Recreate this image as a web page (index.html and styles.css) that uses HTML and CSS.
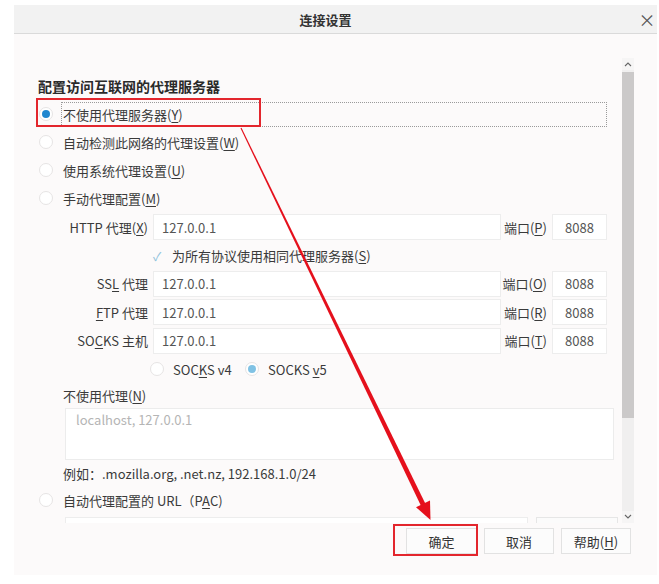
FILE: index.html
```html
<!DOCTYPE html>
<html lang="zh-CN">
<head>
  <meta charset="UTF-8" />
  <title>连接设置</title>
  <meta name="viewport" content="width=device-width, initial-scale=1.0" />
  <link rel="stylesheet" href="styles.css">
</head>
<body>
  <div class="dialog">
    <div class="titlebar">
      <span class="title">连接设置</span>
      <span class="close">×</span>
    </div>

    <div class="main">
      <div class="pane">
        <h2>配置访问互联网的代理服务器</h2>

        <div class="radio-row">
          <span class="radio checked"></span>
          <span class="label focus"><span>不使用代理服务器(<u>Y</u>)</span></span>
        </div>
        <div class="radio-row">
          <span class="radio"></span>
          <span class="label"><span>自动检测此网络的代理设置(<u>W</u>)</span></span>
        </div>
        <div class="radio-row">
          <span class="radio"></span>
          <span class="label"><span>使用系统代理设置(<u>U</u>)</span></span>
        </div>
        <div class="radio-row">
          <span class="radio"></span>
          <span class="label"><span>手动代理配置(<u>M</u>)</span></span>
        </div>

        <div class="manual">
          <span class="field-label"><span>HTTP 代理(<u>X</u>)</span></span>
          <span class="input">127.0.0.1</span>
          <span class="field-label"><span>端口(<u>P</u>)</span></span>
          <span class="input port">8088</span>

          <div class="check-row">
            <span class="check">✓</span>
            <span>为所有协议使用相同代理服务器(<u>S</u>)</span>
          </div>

          <span class="field-label"><span>SS<u>L</u> 代理</span></span>
          <span class="input">127.0.0.1</span>
          <span class="field-label"><span>端口(<u>O</u>)</span></span>
          <span class="input port">8088</span>

          <span class="field-label"><span><u>F</u>TP 代理</span></span>
          <span class="input">127.0.0.1</span>
          <span class="field-label"><span>端口(<u>R</u>)</span></span>
          <span class="input port">8088</span>

          <span class="field-label"><span>SO<u>C</u>KS 主机</span></span>
          <span class="input">127.0.0.1</span>
          <span class="field-label"><span>端口(<u>T</u>)</span></span>
          <span class="input port">8088</span>

          <div class="version-row">
            <span class="opt v4"><span class="radio"></span><span>SOC<u>K</u>S v4</span></span>
            <span class="opt"><span class="radio soft"></span><span>SOCKS <u>v</u>5</span></span>
          </div>
        </div>

        <div class="sub-label">不使用代理(<u>N</u>)</div>
        <div class="textarea">localhost, 127.0.0.1</div>
        <div class="sub-label hint">例如：.mozilla.org, .net.nz, 192.168.1.0/24</div>

        <div class="radio-row pac">
          <span class="radio"></span>
          <span class="label"><span>自动代理配置的 URL（P<u>A</u>C)</span></span>
        </div>
        <div class="pac-field">
          <span class="input wide"></span>
          <span class="reload"></span>
        </div>
      </div>

      <div class="scrollbar">
        <span class="sb-arrow">
          <svg width="8" height="6" viewBox="0 0 8 6"><path d="M1 5 L4 2 L7 5" fill="none" stroke="#666" stroke-width="1.1"/></svg>
        </span>
        <div class="thumb"></div>
        <span class="sb-arrow bottom">
          <svg width="8" height="6" viewBox="0 0 8 6"><path d="M1 1 L4 4 L7 1" fill="none" stroke="#666" stroke-width="1.1"/></svg>
        </span>
      </div>
    </div>

    <div class="buttons">
      <button class="ok">确定</button>
      <button>取消</button>
      <button>帮助(<u>H</u>)</button>
    </div>
  </div>

  <!-- red annotations drawn over the dialog -->
  <svg class="annot" width="659" height="584" viewBox="0 0 659 584">
    <rect x="37" y="99" width="223" height="27" fill="none" stroke="#e3262d" stroke-width="2"/>
    <rect x="394" y="525" width="83" height="30" fill="none" stroke="#e3262d" stroke-width="2"/>
    <polygon points="241.5,127.8 240.5,128.2 421.3,506.6 425.8,504.4" fill="#e5101c"/>
    <polygon points="430,500.4 416,507.2 430.5,520" fill="#e5101c"/>
  </svg>
</body>
</html>
```

FILE: styles.css
```css
* {
  box-sizing: border-box;
}

html, body {
  margin: 0;
  padding: 0;
  background: #fff;
}

body {
  position: relative;
  width: 659px;
  height: 584px;
  overflow: hidden;
  font-family: "Noto Sans CJK SC", "Noto Sans", sans-serif;
  font-size: 13px;
  color: #3a3a3a;
}

u {
  text-underline-offset: 2px;
}

.dialog {
  margin: 5px 0 0 14px;
  width: 643px;
  height: 570px;
  background: #fcfafa;
  display: flex;
  flex-direction: column;
}

.titlebar {
  flex: none;
  height: 29px;
  display: flex;
  align-items: center;
  background: #f2f2f2;
  border-bottom: 1px solid #dadada;
}

.title {
  flex: 1;
  text-align: center;
  font-weight: bold;
  color: #333;
}

.close {
  width: 20px;
  text-align: center;
  font-size: 17px;
  color: #555;
}

.main {
  flex: none;
  height: 489px;
  padding-top: 24px;
  display: flex;
}

.pane {
  flex: 1;
  overflow: hidden;
  padding: 0 15px 0 24px;
}

.pane h2 {
  margin: 18px 0 4px;
  font-size: 14px;
  line-height: 20px;
  font-weight: bold;
  color: #2a2a2a;
}

.radio-row {
  height: 28px;
  display: flex;
  align-items: center;
  gap: 8px;
  padding-left: 1px;
}

.radio {
  flex: none;
  width: 14px;
  height: 14px;
  border-radius: 50%;
  background: #fff;
  border: 1px solid #e6e4e4;
  display: flex;
  justify-content: center;
  align-items: center;
}

.radio.checked::after,
.radio.soft::after {
  content: "";
  width: 8px;
  height: 8px;
  border-radius: 50%;
  background: #1f86cf;
}

.radio.soft::after {
  background: #80c2e4;
}

.label {
  height: 25px;
  padding: 0 1px;
  border: 1px solid transparent;
  display: flex;
  align-items: center;
  white-space: nowrap;
}

.label.focus {
  flex: 1;
  border: 1px dotted #9a9a9a;
}

.manual {
  margin: 1px 0 0 25px;
  display: grid;
  grid-template-columns: 85px 348px 41px 55px;
  grid-template-rows: 28px 28px 29px 28px 29px 28px;
  column-gap: 5px;
  align-items: center;
}

.field-label {
  display: flex;
  justify-content: flex-end;
  white-space: nowrap;
}

.input {
  height: 26px;
  padding: 0 8px;
  background: #fff;
  border: 1px solid #ededed;
  display: flex;
  align-items: center;
  color: #555;
}

.input.port {
  justify-content: center;
}

.check-row,
.version-row {
  grid-column: 2 / 5;
  margin-left: -3px;
  display: flex;
  align-items: center;
}

.check-row {
  gap: 8px;
}

.check {
  width: 14px;
  height: 14px;
  display: flex;
  justify-content: center;
  align-items: center;
  font-size: 12px;
  color: #8fc2dc;
}

.opt {
  display: flex;
  align-items: center;
  gap: 9px;
  white-space: nowrap;
}

.opt.v4 {
  width: 95px;
}

.sub-label {
  margin: 3px 0 0 25px;
  line-height: 20px;
}

.sub-label.hint {
  margin-top: 4px;
}

.textarea {
  margin: 2px -7px 0 27px;
  height: 52px;
  padding: 1px 10px;
  line-height: 20px;
  background: #fff;
  border: 1px solid #ececec;
  color: #b5b5b5;
}

.radio-row.pac {
  margin-top: 2px;
}

.pac-field {
  margin: 3px -11px 0 27px;
  display: flex;
  gap: 8px;
}

.input.wide {
  width: 463px;
}

.reload {
  width: 82px;
  height: 26px;
  border: 1px solid #e6e6e6;
  background: #fbfbfb;
}

.scrollbar {
  flex: none;
  width: 12px;
  margin-right: 23px;
  background: #f0efef;
  display: flex;
  flex-direction: column;
}

.sb-arrow {
  height: 12px;
  display: flex;
  justify-content: center;
  align-items: center;
  background: #f6f5f5;
}

.sb-arrow.bottom {
  margin-top: auto;
}

.thumb {
  margin-top: 2px;
  height: 346px;
  background: #cbc9c9;
}

.buttons {
  flex: none;
  display: flex;
  justify-content: flex-end;
  gap: 7px;
  padding: 5px 26px 0 0;
}

.buttons button {
  width: 70px;
  height: 26px;
  padding: 0;
  font-family: inherit;
  font-size: 13px;
  color: #333;
  background: #fcfcfc;
  border: 1px solid #e2e2e2;
}

.buttons .ok {
  width: 71px;
}

.annot {
  position: absolute;
  top: 0;
  left: 0;
  pointer-events: none;
}
```
